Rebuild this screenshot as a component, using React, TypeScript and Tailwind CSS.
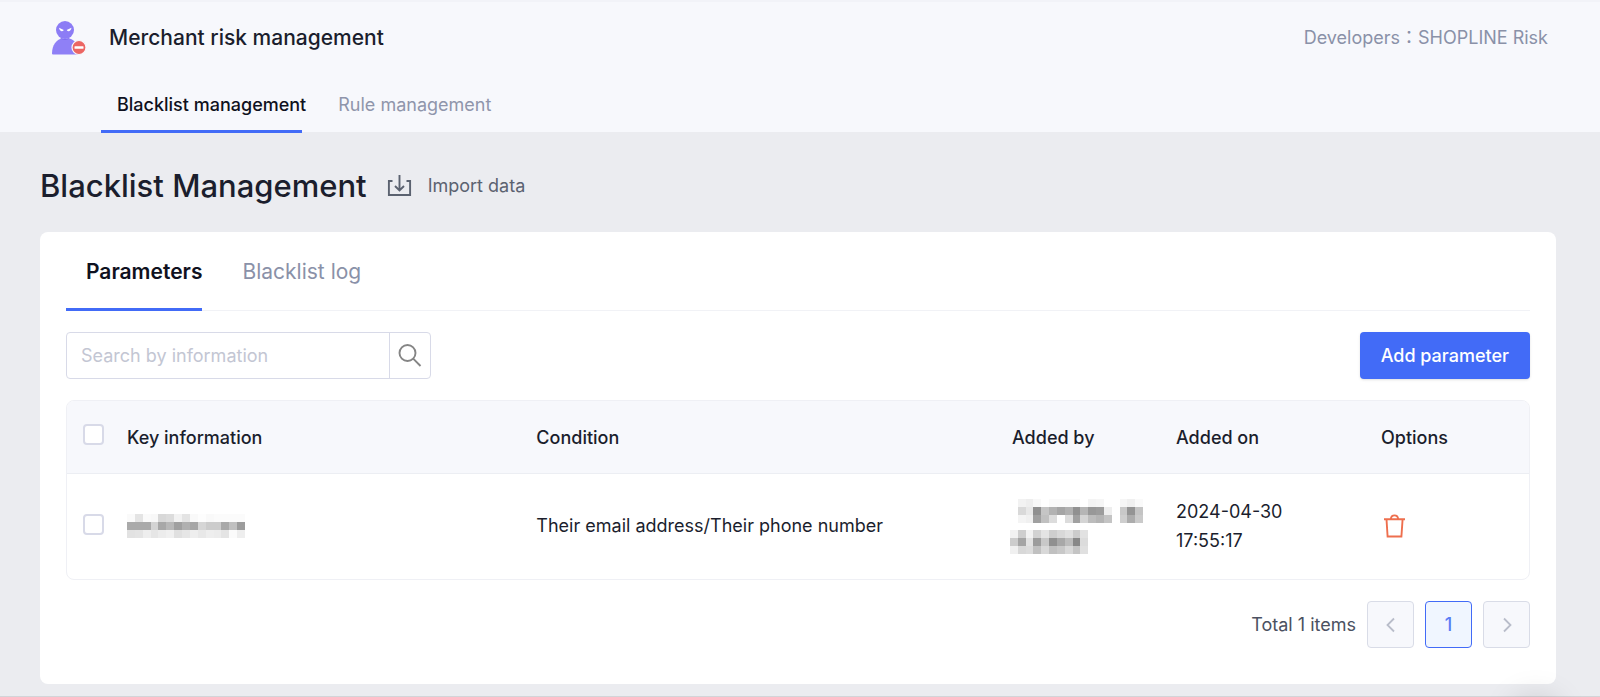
import React, { useState } from "react";

// grey level of every redacted cell, two hex digits each
const keyCells = [
  "fae4faf8d8dcf2e4f9fdf9fbfbfbfb",
  "aaaaaad4a8b8a0b0a6d6cccca8c09c",
  "e2e4eee6ecf0e0e6eee8eeece4fbee",
];

const addedByCells = [
  "fff2eef8fffafafafafff4f6fffff6f0fa",
  "ffd9e890c5b2a5b090b5989ceeffc894c4",
  "fff4f0a0c0dcffdca0d4bcb4c4ffceacca",
  "ffffffffffffffffffffffffffffffffff",
  "f2cef2d2e4ced8e0cce2ffffffffffffff",
  "cca4e29cc890a8bc88dcffffffffffffff",
  "f0d8dcc0d8c0c8d8c4e0ffffffffffffff",
];

type MosaicProps = {
  rows: string[];
  label: string;
  className: string;
};

const Mosaic: React.FC<MosaicProps> = ({ rows, label, className }) => {
  const cols = rows[0].length / 2;
  return (
    <svg
      role="img"
      aria-label={label}
      className={className}
      viewBox={`0 0 ${cols} ${rows.length}`}
      preserveAspectRatio="none"
      shapeRendering="crispEdges"
    >
      {rows.map((row, y) =>
        Array.from({ length: cols }, (_, x) => {
          const c = row.slice(x * 2, x * 2 + 2);
          return <rect key={`${x}-${y}`} x={x} y={y} width="1" height="1" fill={`#${c}${c}${c}`} />;
        })
      )}
    </svg>
  );
};

const Logo = () => (
  <svg width="35" height="36" viewBox="0 0 35 36" aria-hidden="true">
    <path d="M0 33.5C0 25 4.5 19.5 10 18.5h7c5.500 1 9.500 6 9.500 13v3H1a1 1 0 0 1-1-1z" fill="#8f80f6" />
    <circle cx="13" cy="10" r="9" fill="#8c7cf5" />
    <path d="M7.500 17c3.500 2.700 7.500 2.700 11 0-.6 1.500-2.500 2.800-5.500 2.800S8 18.500 7.500 17z" fill="#7a68f2" />
    <path d="M7 7.800l4.800 2.200c-1.200 2-4.200 1.600-4.800-2.200zM19.500 7.800L14.700 10c1.200 2 4.200 1.600 4.800-2.200z" fill="#fff" />
    <circle cx="27" cy="27.500" r="7" fill="#ec6663" stroke="#f7f8fc" strokeWidth="1.200" />
    <rect x="22.500" y="26.200" width="9" height="2.600" rx=".5" fill="#fff" />
  </svg>
);

const ImportIcon = () => (
  <svg width="25" height="22" viewBox="0 0 25 22" fill="none" stroke="#5b6270" strokeWidth="1.900" aria-hidden="true">
    <path d="M5.500 6H1.900v14h21.200V6h-3.600" />
    <path d="M12.500 0v15.500M8 11l4.500 4.500L17 11" />
  </svg>
);

const SearchIcon = () => (
  <svg width="24" height="24" viewBox="0 0 24 24" fill="none" stroke="#858585" strokeWidth="1.900" aria-hidden="true">
    <circle cx="9.500" cy="9" r="8" />
    <path d="M15.200 14.700l7.300 7.300" />
  </svg>
);

const TrashIcon = () => (
  <svg width="27" height="24" viewBox="0 0 27 24" fill="none" stroke="#ee6f4e" strokeWidth="1.900" aria-hidden="true">
    <path d="M3 5.200h21M5.500 5.200l1.100 17.300h13.800l1.200-17.300M9.800 5c.6-4.800 6.800-4.800 7.400 0" />
  </svg>
);

const Chevron: React.FC<{ d: string }> = ({ d }) => (
  <svg width="16" height="16" viewBox="0 0 16 16" fill="none" stroke="#b9bdca" strokeWidth="1.800" aria-hidden="true">
    <path d={d} />
  </svg>
);

const Checkbox: React.FC<{ label: string; checked: boolean; onChange: () => void }> = ({
  label,
  checked,
  onChange,
}) => (
  <input
    type="checkbox"
    aria-label={label}
    checked={checked}
    onChange={onChange}
    className="block size-[21px] appearance-none rounded border-2 border-[#d8dae8] bg-white checked:bg-[#426bf7]"
  />
);

const App: React.FC = () => {
  const [query, setQuery] = useState("");
  const [selected, setSelected] = useState(false);

  return (
    <div className="flex min-h-screen flex-col overflow-hidden border-b border-[#d3d4d8] bg-[#ebecf0] font-['Inter','Noto_Sans_CJK_TC',sans-serif] text-lg text-[#1b1e2d]">
      <header className="border-t-2 border-[#f2f3f8] bg-[#f7f8fc]">
        <div className="flex h-[72px] items-center px-13">
          <Logo />
          <h1 className="ml-[22px] text-[21px] font-medium">Merchant risk management</h1>
          <p className="ml-auto text-[#8a91a8]">Developers：SHOPLINE Risk</p>
        </div>
        <nav className="flex h-[58px] gap-8 pl-[101px]">
          <a href="#blacklist" className="relative flex items-center pt-1 pl-4 font-medium text-[#0f1120]">
            Blacklist management
            <span className="absolute right-1 -bottom-px left-0 h-[3px] bg-[#426bf7]" />
          </a>
          <a href="#rules" className="flex items-center pt-1 text-[#8f95ab]">
            Rule management
          </a>
        </nav>
      </header>

      <main className="pr-11 pl-10">
        <div className="flex h-25 items-center gap-5 pt-2">
          <h2 className="text-[31px] font-medium">Blacklist Management</h2>
          <button className="flex items-center gap-4 text-[#5b6270]">
            <ImportIcon />
            Import data
          </button>
        </div>

        <section className="rounded-lg bg-white px-[26px] pb-9">
          <div className="flex h-[79px] gap-10 border-b border-[#f1f2f6] text-[21px]">
            <button className="relative pt-0.5 pl-5 font-semibold text-[#0f1120]">
              Parameters
              <span className="absolute right-0 -bottom-px left-0 h-[3px] bg-[#426bf7]" />
            </button>
            <button className="pt-0.5 text-[#8a91a8]">Blacklist log</button>
          </div>

          <div className="mt-[21px] flex items-center justify-between">
            <form
              className="flex h-[47px] w-[365px] overflow-hidden rounded border border-[#d8dae8]"
              onSubmit={(e) => e.preventDefault()}
            >
              <input
                type="text"
                aria-label="Search by information"
                placeholder="Search by information"
                value={query}
                onChange={(e) => setQuery(e.target.value)}
                className="min-w-0 flex-1 px-[14px] outline-none placeholder:text-[#c3c6d3]"
              />
              <button
                type="submit"
                aria-label="Search"
                className="flex w-[41px] items-center justify-center border-l border-[#d8dae8]"
              >
                <SearchIcon />
              </button>
            </form>
            <button className="h-[47px] rounded bg-[#426bf7] px-[21px] font-medium text-white shadow-sm">
              Add parameter
            </button>
          </div>

          <div className="mt-[21px] overflow-hidden rounded-lg border border-[#eff0f5]">
            <table className="w-full table-fixed text-left">
              <thead className="border-b border-[#eceef3] bg-[#f7f8fc]">
                <tr className="h-[72px]">
                  <th className="w-11 pb-1 pl-4">
                    <Checkbox label="Select all" checked={selected} onChange={() => setSelected(!selected)} />
                  </th>
                  <th className="w-[28%] px-4 pt-0.5 font-medium">Key information</th>
                  <th className="px-4 pt-0.5 font-medium">Condition</th>
                  <th className="w-[164px] px-4 pt-0.5 font-medium">Added by</th>
                  <th className="w-[205px] px-4 pt-0.5 font-medium">Added on</th>
                  <th className="w-[164px] px-4 pt-0.5 font-medium">Options</th>
                </tr>
              </thead>
              <tbody>
                <tr className="h-[106px]">
                  <td className="pb-1 pl-4">
                    <Checkbox label="Select row" checked={selected} onChange={() => setSelected(!selected)} />
                  </td>
                  <td className="px-4">
                    <Mosaic rows={keyCells} label="Hidden key" className="h-6 w-[118px]" />
                  </td>
                  <td className="px-4">Their email address/Their phone number</td>
                  <td className="px-[14px]">
                    <Mosaic rows={addedByCells} label="Hidden name" className="h-[55px] w-[133px]" />
                  </td>
                  <td className="px-4 leading-[29px]">
                    2024-04-30
                    <br />
                    17:55:17
                  </td>
                  <td className="px-4">
                    <button aria-label="Delete" className="block">
                      <TrashIcon />
                    </button>
                  </td>
                </tr>
              </tbody>
            </table>
          </div>

          <div className="mt-[21px] flex items-center justify-end gap-[11px]">
            <span className="text-[#4b5161]">Total 1 items</span>
            <button
              aria-label="Previous page"
              className="flex size-[47px] items-center justify-center rounded border border-[#d9dce7] bg-[#f7f8fc]"
            >
              <Chevron d="M11 1.500L4.500 8l6.500 6.500" />
            </button>
            <button className="size-[47px] rounded border border-[#426bf7] bg-[#f0f6ff] font-medium text-[#5a7df5]">
              1
            </button>
            <button
              aria-label="Next page"
              className="flex size-[47px] items-center justify-center rounded border border-[#d9dce7] bg-[#f7f8fc]"
            >
              <Chevron d="M5 1.500L11.500 8 5 14.500" />
            </button>
          </div>
        </section>
      </main>

      <div className="fixed right-10 -bottom-12 size-12 rounded-full shadow-[0_0_32px_rgba(0,0,0,0.15)]" />
    </div>
  );
};

export default App;
